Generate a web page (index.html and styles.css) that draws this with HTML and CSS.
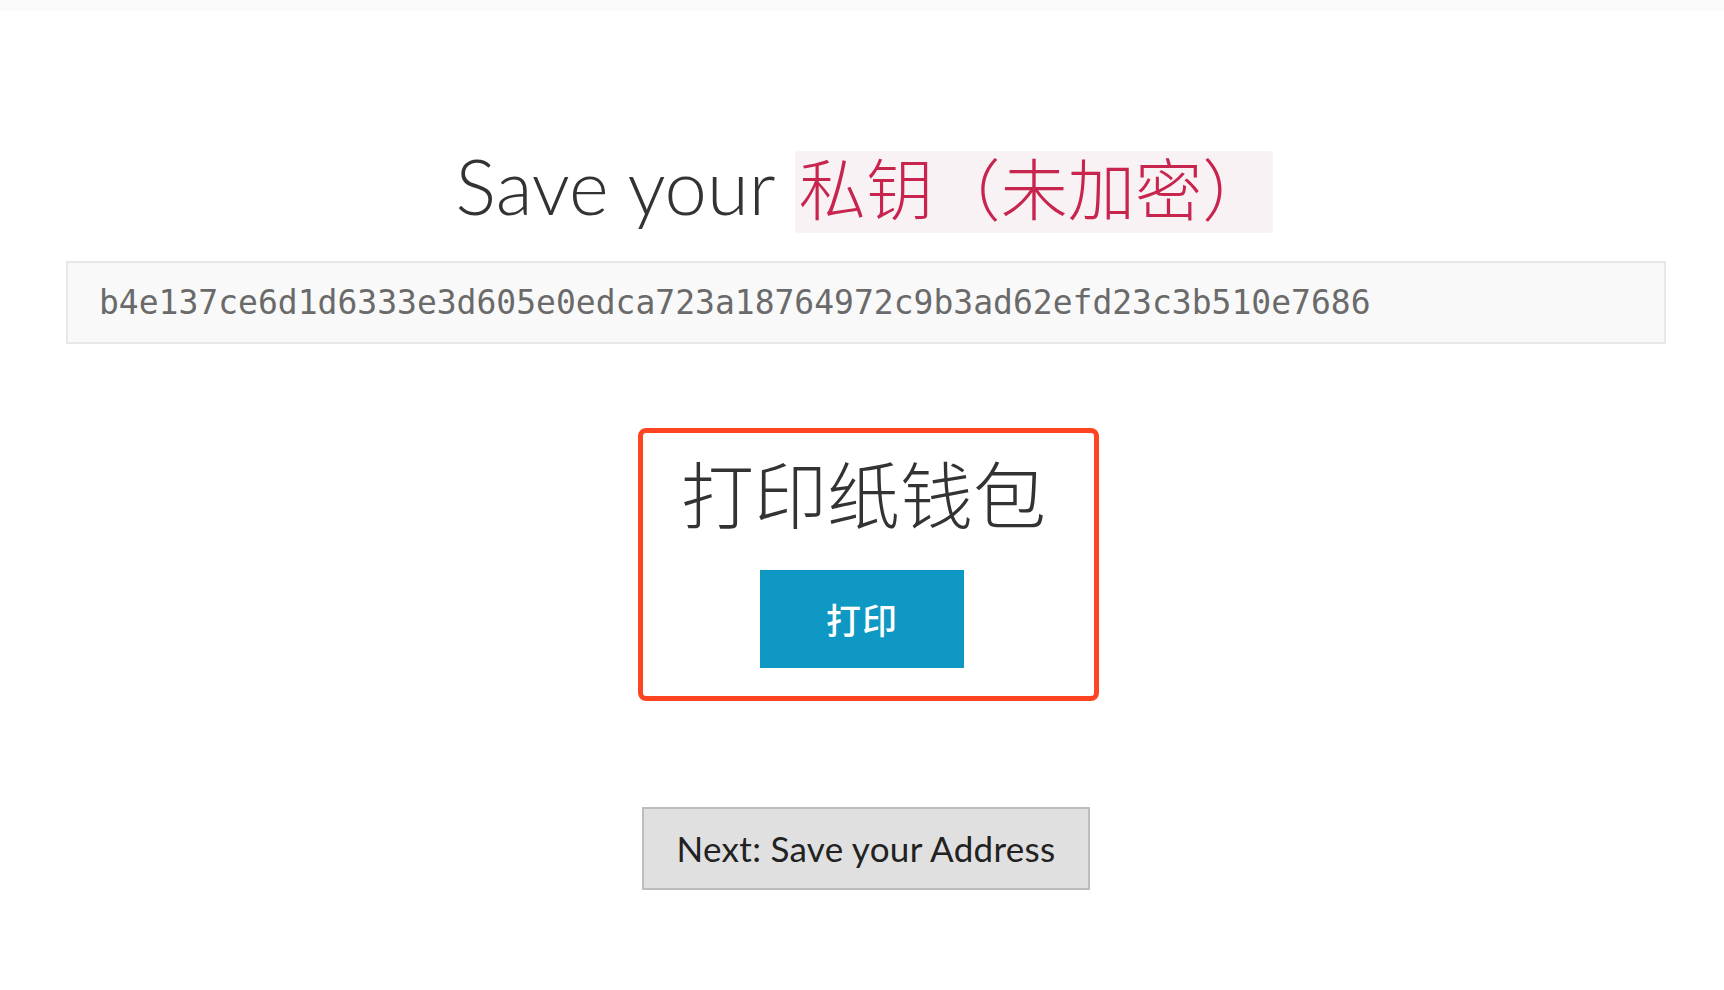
FILE: index.html
```html
<!DOCTYPE html>
<html lang="zh-CN">
<head>
<meta charset="utf-8">
<title>Save your private key</title>
<link rel="stylesheet" href="styles.css">
</head>
<body>
<div class="topbar"></div>
<main class="page">
  <h1 class="title">Save your <code class="hl">私钥（未加密）</code></h1>
  <div class="keybox">b4e137ce6d1d6333e3d605e0edca723a18764972c9b3ad62efd23c3b510e7686</div>
  <section class="print-card">
    <h2 class="print-title">打印纸钱包</h2>
    <a class="btn-print" href="#">打印</a>
  </section>
  <a class="btn-next" href="#">Next: Save your Address</a>
</main>
</body>
</html>
```
FILE: styles.css
```css
html, body {
  margin: 0;
  padding: 0;
  background: #ffffff;
}
body {
  font-family: Lato, "Noto Sans CJK SC", sans-serif;
  color: #333333;
}
.topbar {
  height: 11px;
  background: #fafafa;
}
.page {
  width: 1600px;
  margin-left: 66px;
  padding-top: 133px;
  display: flex;
  flex-direction: column;
  align-items: center;
}
.title {
  margin: 0 0 0 -3px;
  font-family: Lato, "Noto Sans CJK SC", sans-serif;
  font-weight: 300;
  font-size: 76px;
  line-height: 1.1;
  color: #333333;
  text-align: center;
}
.hl {
  font-family: "DejaVu Sans Mono", "Noto Sans CJK SC", monospace;
  font-size: 88.5%;
  font-weight: 300;
  color: #c7254e;
  background: #f9f2f4;
  padding: 2px 4px;
  border-radius: 4px;
}
.keybox {
  align-self: stretch;
  margin-top: 32px;
  height: 83px;
  box-sizing: border-box;
  border: 2px solid #e8e8e8;
  background: #f9f9f9;
  padding: 0 31px;
  font-family: "DejaVu Sans Mono", monospace;
  font-size: 33px;
  line-height: 79px;
  color: #6a6a6a;
}
.print-card {
  margin-top: 84px;
  margin-left: 4px;
  width: 461px;
  height: 273px;
  box-sizing: border-box;
  border: 5px solid #ff4422;
  border-radius: 8px;
  display: flex;
  flex-direction: column;
  align-items: center;
  padding-top: 22px;
}
.print-title {
  margin: 0 9px 0 0;
  font-family: "Noto Sans CJK SC", sans-serif;
  font-weight: 300;
  font-size: 73px;
  line-height: 1;
  color: #333333;
}
.btn-print {
  margin-top: 42px;
  margin-right: 12px;
  width: 204px;
  height: 98px;
  background: #0f98c3;
  color: #ffffff;
  text-decoration: none;
  display: flex;
  align-items: center;
  justify-content: center;
  font-family: "Noto Sans CJK SC", sans-serif;
  font-weight: 500;
  font-size: 35px;
  letter-spacing: 1px;
}
.btn-next {
  margin-top: 106px;
  width: 448px;
  height: 83px;
  box-sizing: border-box;
  border: 2px solid #bdbdbd;
  background: #e0e0e0;
  color: #222222;
  text-decoration: none;
  display: flex;
  align-items: center;
  justify-content: center;
  font-family: Lato, sans-serif;
  font-size: 35px;
  letter-spacing: 0.3px;
}
```
